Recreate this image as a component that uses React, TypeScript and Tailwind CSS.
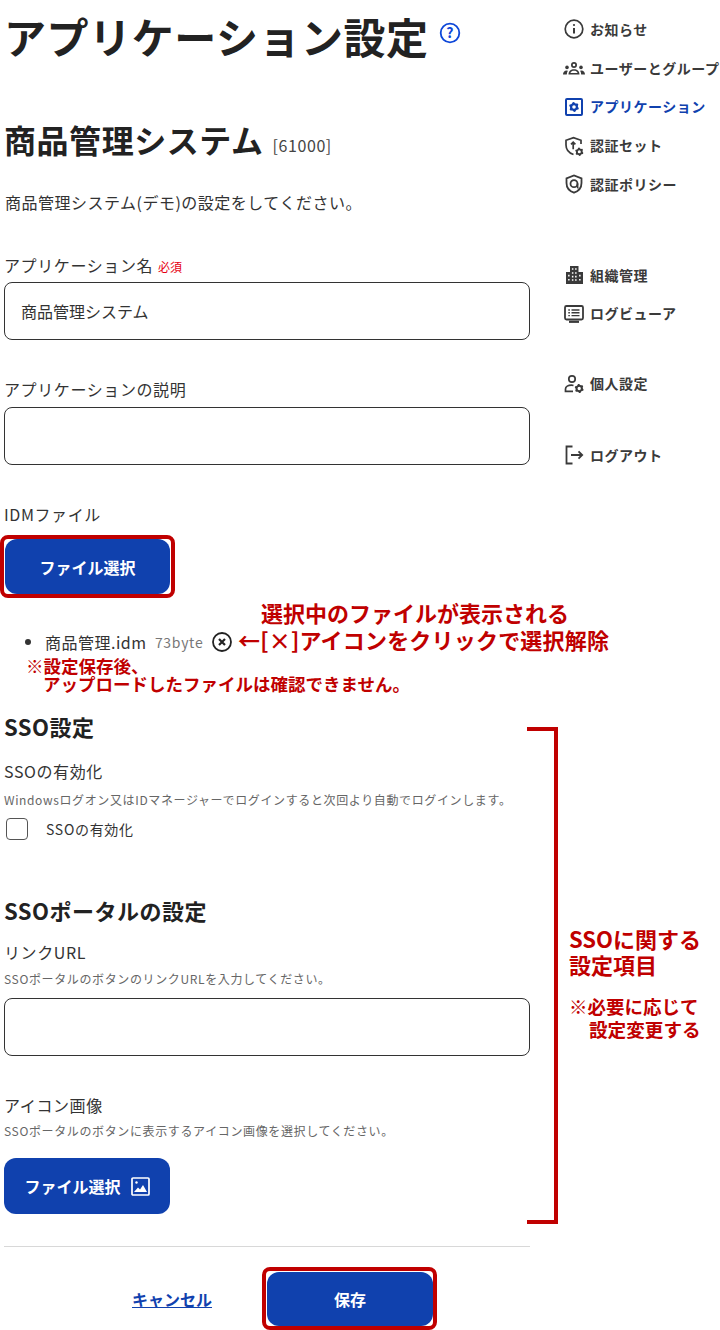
import React from "react";

const font = { fontFamily: '"Noto Sans CJK JP", "Noto Sans", sans-serif' };

function Gear({ cx, cy, r }: { cx: number; cy: number; r: number }) {
  const pts: string[] = [];
  for (let i = 0; i < 24; i++) {
    const a = (i * Math.PI) / 12 - Math.PI / 2 - Math.PI / 12;
    const rr = i % 4 === 0 || i % 4 === 1 ? r : r * 0.8;
    pts.push(`${(cx + rr * Math.cos(a)).toFixed(2)} ${(cy + rr * Math.sin(a)).toFixed(2)}`);
  }
  const h = r * 0.36;
  return (
    <path
      fill="currentColor"
      fillRule="evenodd"
      d={`M${pts.join("L")}Z M${cx - h} ${cy}a${h} ${h} 0 1 0 ${2 * h} 0a${h} ${h} 0 1 0 ${-2 * h} 0Z`}
    />
  );
}

const icons: Record<string, React.ReactNode> = {
  info: (
    <g fill="none" stroke="currentColor" strokeWidth="1.700">
      <circle cx="11" cy="10" r="8.800" />
      <path d="M11 9v5.500" strokeWidth="2" />
      <circle cx="11" cy="6" r="1.100" fill="currentColor" stroke="none" />
    </g>
  ),
  users: (
    <g fill="currentColor">
      <path
        fillRule="evenodd"
        d="M11 4a3 3 0 1 1 0 6a3 3 0 1 1 0-6zm0 1.700a1.300 1.300 0 1 0 0 2.600a1.300 1.300 0 1 0 0-2.600zM5.500 16.500c0-3.500 2.500-5.300 5.500-5.300s5.500 1.800 5.500 5.300zm1.900-1.600h7.200c-.5-1.500-2-2.100-3.600-2.100s-3.100.6-3.600 2.100z"
      />
      <circle cx="4" cy="9.400" r="1.800" />
      <circle cx="18" cy="9.400" r="1.800" />
      <path d="M0 16.500c0-2.300 1.300-4 3.700-4l1.200.2c-.7 1-1.100 2.300-1.100 3.800zM22 16.500c0-2.300-1.300-4-3.700-4l-1.200.2c.7 1 1.100 2.300 1.100 3.800z" />
    </g>
  ),
  app: (
    <g>
      <rect x="3" y="2" width="16" height="16" rx="1" fill="none" stroke="currentColor" strokeWidth="2" />
      <Gear cx={11} cy={10} r={5} />
    </g>
  ),
  shieldKey: (
    <g>
      <path
        d="M10.500 18.500C6 17 3 13.600 3 9V4.300L10.500 1.600l7.500 2.700V8"
        fill="none"
        stroke="currentColor"
        strokeWidth="1.700"
      />
      <path d="M10.200 6.200v7M8 8.400l2.200-2.200 2.200 2.200" fill="none" stroke="currentColor" strokeWidth="1.700" />
      <Gear cx={16.300} cy={15.800} r={4.200} />
    </g>
  ),
  shieldAt: (
    <g fill="none" stroke="currentColor" strokeWidth="1.800">
      <path d="M11 18.700C6.400 17.100 3.500 13.600 3.500 9V4.300L11 1.500l7.500 2.800V9c0 4.600-2.900 8.100-7.500 9.700z" />
      <circle cx="11" cy="9.700" r="3.500" />
      <path d="M14.500 9.500v3.300c0 .6.400 1 1 1" />
    </g>
  ),
  building: (
    <g fill="currentColor">
      <path
        fillRule="evenodd"
        d="M7 1h8.500v6H20v12H3V7h4zM8.900 3.200v1.600h1.500V3.200zm3.200 0v1.600h1.500V3.200zM8.900 7.200v1.600h1.500V7.200zm3.200 0v1.600h1.500V7.200zM5.100 9.800v1.600h1.500V9.800zm3.800 1v1.600h1.500v-1.600zm3.200 0v1.600h1.500v-1.600zm4 -1v1.600h1.500V9.800zM5.100 14v1.600h1.500V14zm3.800 .2v1.600h1.500v-1.600zm3.200 0v1.600h1.500v-1.600zm4 -.2v1.600h1.500V14z"
      />
    </g>
  ),
  monitor: (
    <g fill="none" stroke="currentColor">
      <rect x="2" y="2" width="18" height="13.500" rx="1.500" strokeWidth="1.800" />
      <path d="M8.500 6h8M8.500 8.800h8M8.500 11.600h8M5.300 6h1.600M5.300 8.800h1.600M5.300 11.600h1.600" strokeWidth="1.400" />
      <path d="M6 17.800h10" strokeWidth="2.200" />
    </g>
  ),
  userCog: (
    <g>
      <circle cx="9" cy="5" r="3.200" fill="none" stroke="currentColor" strokeWidth="1.700" />
      <path d="M10.500 11.500c-1-.3-1.500-.3-2-.3-3.300 0-6 1.700-6 3.900v2.300H10" fill="none" stroke="currentColor" strokeWidth="1.700" />
      <Gear cx={16.200} cy={14.500} r={4.600} />
    </g>
  ),
  logout: (
    <g fill="none" stroke="currentColor" strokeWidth="1.800">
      <path d="M9.500 1.500H3.500v17h6" />
      <path d="M8 10h11M15.500 6.300L19.200 10l-3.700 3.700" />
    </g>
  ),
};

function NavItem({ icon, label, active }: { icon: string; label: string; active?: boolean }) {
  return (
    <div
      className={`flex h-[38.75px] items-center gap-[5px] whitespace-nowrap text-[14px] font-bold tracking-[0.5px] ${
        active ? "text-[#1041ae]" : "text-[#3a3a3a]"
      }`}
    >
      <svg width="22" height="20" viewBox="0 0 22 20" className="shrink-0">
        {icons[icon]}
      </svg>
      <span>{label}</span>
    </div>
  );
}

function Label({ children }: { children: React.ReactNode }) {
  return <div className="h-[24px] text-[16px] leading-[24px] tracking-[0.6px] text-[#333]">{children}</div>;
}

function Help({ children }: { children: React.ReactNode }) {
  return <div className="h-[18px] text-[12px] leading-[18px] tracking-[0.63px] text-[#666]">{children}</div>;
}

function Field({ value }: { value?: string }) {
  return (
    <div className="flex h-[58px] w-[526px] items-center rounded-[8px] border border-[#333] bg-white px-[16px] text-[16px] text-[#333]">
      {value}
    </div>
  );
}

function Annotation({ className, children }: { className: string; children: React.ReactNode }) {
  return (
    <div className={`absolute whitespace-nowrap font-bold leading-none text-[#c00000] ${className}`}>{children}</div>
  );
}

export default function App() {
  return (
    <div className="relative flex h-[1330px] w-[720px] overflow-hidden bg-white" style={font}>
      <main className="w-[563px] shrink-0 pl-[4px]">
        <h1 className="mt-[6px] flex h-[60px] items-center text-[42px] font-bold leading-[60px] tracking-[0.55px] text-[#222]">
          アプリケーション設定
          <svg width="22" height="22" viewBox="0 0 22 22" className="ml-[10px] mt-[-7px]">
            <circle cx="11" cy="11" r="9.300" fill="none" stroke="#0d47d9" strokeWidth="1.800" />
            <text x="11" y="16" textAnchor="middle" fontSize="14" fontWeight="700" fill="#0d47d9">
              ?
            </text>
          </svg>
        </h1>
        <div className="ml-[0px] mt-[51px] flex h-[44px] items-end">
          <span className="text-[32px] font-bold leading-[44px] tracking-[0.55px] text-[#222]">商品管理システム</span>
          <span className="mb-[4px] ml-[9px] text-[16px] leading-[24px] tracking-[0.6px] text-[#444]">[61000]</span>
        </div>
        <div className="ml-[1px] mt-[29px] h-[24px] text-[16px] leading-[24px] tracking-[0.5px] text-[#333]">
          商品管理システム(デモ)の設定をしてください。
        </div>
        <div className="mt-[39px]">
          <Label>
            アプリケーション名
            <span className="ml-[5px] text-[12px] tracking-[0px] text-[#e60012]">必須</span>
          </Label>
        </div>
        <div className="mt-[5px]">
          <Field value="商品管理システム" />
        </div>
        <div className="mt-[37px]">
          <Label>アプリケーションの説明</Label>
        </div>
        <div className="mt-[6px]">
          <Field />
        </div>
        <div className="mt-[37px]">
          <Label>IDMファイル</Label>
        </div>
        <div className="relative ml-[1px] mt-[13px] flex h-[55px] w-[165px] items-center justify-center rounded-[12px] bg-[#1041ae] text-[16px] font-bold text-white">
          ファイル選択
        </div>
        <div className="ml-[21px] mt-[37px] flex h-[22px] items-center text-[16px] text-[#333]">
          <span className="mr-[14px] h-[6px] w-[6px] rounded-full bg-[#333]" />
          <span className="tracking-[0.5px]">商品管理.idm</span>
          <span className="ml-[8.300px] text-[14px] tracking-[0.7px] text-[#777]">73byte</span>
          <svg width="20" height="20" viewBox="0 0 20 20" className="ml-[9px]">
            <circle cx="10" cy="10" r="9" fill="none" stroke="#222" strokeWidth="1.800" />
            <path d="M7 7l6 6M13 7l-6 6" stroke="#222" strokeWidth="2.200" />
          </svg>
        </div>
        <h3 className="mt-[57px] h-[32px] text-[22px] font-bold leading-[32px] tracking-[0.5px] text-[#222]">SSO設定</h3>
        <div className="mt-[17px]">
          <Label>SSOの有効化</Label>
        </div>
        <div className="mt-[8px]">
          <Help>Windowsログオン又はIDマネージャーでログインすると次回より自動でログインします。</Help>
        </div>
        <div className="mt-[8px] flex h-[24px] items-center text-[14px] tracking-[0.7px] text-[#333]">
          <span className="ml-[2px] h-[22px] w-[22px] rounded-[4px] border border-[#555] bg-white" />
          <span className="ml-[18px]">SSOの有効化</span>
        </div>
        <h3 className="mt-[53px] h-[32px] text-[22px] font-bold leading-[32px] tracking-[0.5px] text-[#222]">
          SSOポータルの設定
        </h3>
        <div className="mt-[14px]">
          <Label>リンクURL</Label>
        </div>
        <div className="mt-[6px]">
          <Help>SSOポータルのボタンのリンクURLを入力してください。</Help>
        </div>
        <div className="mt-[10px]">
          <Field />
        </div>
        <div className="mt-[37px]">
          <Label>アイコン画像</Label>
        </div>
        <div className="mt-[5px]">
          <Help>SSOポータルのボタンに表示するアイコン画像を選択してください。</Help>
        </div>
        <div className="mt-[18px] flex h-[56px] w-[166px] items-center justify-center gap-[10px] rounded-[12px] bg-[#1041ae] text-[16px] font-bold text-white">
          ファイル選択
          <svg width="19" height="19" viewBox="0 0 19 19">
            <rect x="1" y="1" width="17" height="17" rx="1" fill="none" stroke="white" strokeWidth="1.700" />
            <circle cx="5.500" cy="5.500" r="1.200" fill="white" />
            <path d="M3 15l4-4.500 2 2 3-4.500 4 7z" fill="white" />
          </svg>
        </div>
        <div className="mt-[32px] h-px w-[526px] bg-[#d8d8d8]" />
        <div className="mt-[25px] flex h-[54px] w-[526px] items-center">
          <a className="ml-[128px] text-[16px] font-bold text-[#1041ae] underline">キャンセル</a>
          <div className="ml-[55px] flex h-[54px] w-[166px] items-center justify-center rounded-[12px] bg-[#1041ae] text-[16px] font-bold text-white">
            保存
          </div>
        </div>
      </main>

      <aside className="pt-[10px]">
        <NavItem icon="info" label="お知らせ" />
        <NavItem icon="users" label="ユーザーとグループ" />
        <NavItem icon="app" label="アプリケーション" active />
        <NavItem icon="shieldKey" label="認証セット" />
        <NavItem icon="shieldAt" label="認証ポリシー" />
        <div className="mt-[52px]">
          <NavItem icon="building" label="組織管理" />
          <NavItem icon="monitor" label="ログビューア" />
        </div>
        <div className="mt-[31px]">
          <NavItem icon="userCog" label="個人設定" />
        </div>
        <div className="mt-[33px]">
          <NavItem icon="logout" label="ログアウト" />
        </div>
      </aside>

      {/* Red call-out annotations lying over the page */}
      <div className="pointer-events-none absolute left-0 top-[535px] h-[63px] w-[175px] rounded-[8px] border-[4px] border-[#c00000]" />
      <div className="pointer-events-none absolute left-[262px] top-[1267px] h-[63px] w-[175px] rounded-[8px] border-[4px] border-[#c00000]" />
      <Annotation className="left-[261px] top-[601px] text-[22px]">選択中のファイルが表示される</Annotation>
      <Annotation className="left-[238px] top-[628px] text-[22px] tracking-[0.2px]">←[×]アイコンをクリックで選択解除</Annotation>
      <Annotation className="left-[26px] top-[657px] text-[17.500px]">※設定保存後、</Annotation>
      <Annotation className="left-[43px] top-[675px] text-[17.500px]">アップロードしたファイルは確認できません。</Annotation>
      <div className="absolute left-[527px] top-[727px] h-[497px] w-[31px] border-y-[4px] border-r-[4px] border-[#c00000]" />
      <Annotation className="left-[569px] top-[927px] text-[22px]">SSOに関する</Annotation>
      <Annotation className="left-[569px] top-[953px] text-[22px]">設定項目</Annotation>
      <Annotation className="left-[569px] top-[997px] text-[18.500px]">※必要に応じて</Annotation>
      <Annotation className="left-[589px] top-[1020px] text-[18.600px]">設定変更する</Annotation>
    </div>
  );
}
